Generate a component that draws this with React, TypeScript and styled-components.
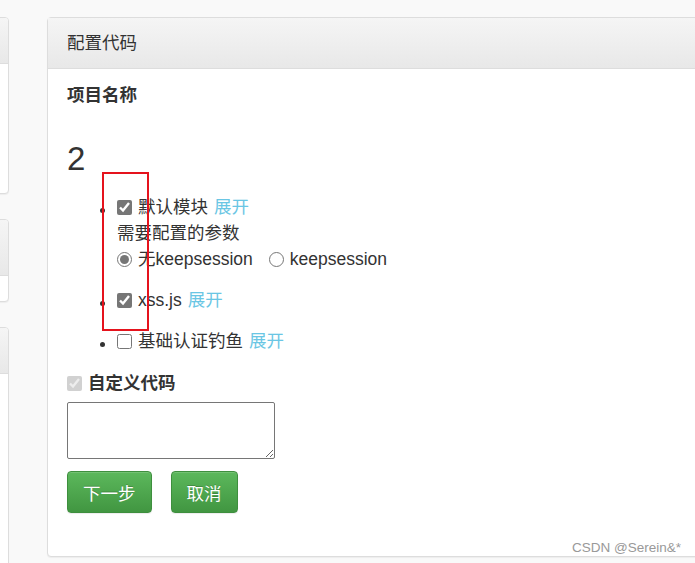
import styled, { createGlobalStyle } from "styled-components";

const GlobalStyle = createGlobalStyle`
  html, body {
    margin: 0;
    padding: 0;
    background: #f9f9f9;
    overflow: hidden;
  }
  body {
    font-family: "Liberation Sans", "Noto Sans CJK SC", sans-serif;
    color: #333;
    font-size: 17.5px;
  }
`;

const Page = styled.div`
  position: relative;
  display: flex;
  align-items: flex-start;
  gap: 38px;
  padding-top: 17px;
  width: 100vw;
  height: 563px;
  box-sizing: border-box;
  overflow: hidden;
`;

const SideColumn = styled.div`
  display: flex;
  flex-direction: column;
  gap: 25px;
  width: 200px;
  margin-left: -191px;
  flex-shrink: 0;
`;

const Panel = styled.div<{ $height: number }>`
  background: #fff;
  border: 1px solid #ddd;
  border-radius: 4px;
  box-shadow: 0 1px 1px rgba(0, 0, 0, 0.05);
  height: ${(p) => p.$height}px;
  box-sizing: border-box;
  overflow: hidden;
`;

const PanelHeading = styled.div<{ $height: number }>`
  height: ${(p) => p.$height}px;
  box-sizing: border-box;
  border-bottom: 1px solid #ddd;
  background-image: linear-gradient(to bottom, #f5f5f5 0, #e8e8e8 100%);
  display: flex;
  align-items: center;
  padding: 0 19px 3px;
  font-size: 17.5px;
  color: #333;
`;

const MainPanel = styled.div`
  width: 700px;
  flex-shrink: 0;
  background: #fff;
  border: 1px solid #ddd;
  border-radius: 4px;
  box-shadow: 0 1px 1px rgba(0, 0, 0, 0.05);
  box-sizing: border-box;
`;

const PanelBody = styled.div`
  padding: 15px 19px 43px;
`;

const FieldLabel = styled.div`
  font-weight: bold;
  line-height: 22px;
`;

const BigNumber = styled.div`
  font-size: 33px;
  line-height: 36px;
  margin-top: 35px;
`;

const ModuleList = styled.ul`
  list-style: disc;
  margin: 17px 0 18px;
  padding-left: 50px;
  font-size: 10px;
`;

const ModuleItem = styled.li<{ $last?: boolean }>`
  line-height: 26px;
  padding-bottom: ${(p) => (p.$last ? 0 : 15)}px;
  font-size: 17.5px;
`;

const Row = styled.div`
  display: flex;
  align-items: center;
  height: 26px;
`;

const Check = styled.input`
  width: 15px;
  height: 15px;
  margin: 0 6px 0 0;
  accent-color: #767676;
`;

const Radio = styled.input`
  width: 15px;
  height: 15px;
  margin: 0 6px 0 0;
  accent-color: #767676;
`;

const RadioLabel = styled.label`
  display: flex;
  align-items: center;
  margin-right: 16px;
`;

const ExpandLink = styled.a`
  color: #6ac6e4;
  text-decoration: none;
  margin-left: 6px;
  cursor: pointer;
`;

const CustomRow = styled.div`
  display: flex;
  align-items: center;
  line-height: 22px;
  font-weight: bold;
`;

const CodeArea = styled.textarea`
  display: block;
  margin-top: 8px;
  width: 208px;
  height: 57px;
  box-sizing: border-box;
  border: 1px solid #767676;
  border-radius: 2px;
  font: inherit;
`;

const ButtonRow = styled.div`
  display: flex;
  gap: 19px;
  margin-top: 12px;
`;

const GreenButton = styled.button`
  height: 42px;
  padding: 0 15px;
  font-family: "Liberation Sans", "Noto Sans CJK SC", sans-serif;
  font-size: 17.5px;
  color: #fff;
  border: 1px solid #3e8f3e;
  border-radius: 4px;
  background-image: linear-gradient(to bottom, #5cb85c 0, #419641 100%);
  text-shadow: 0 -1px 0 rgba(0, 0, 0, 0.2);
  box-shadow: inset 0 1px 0 rgba(255, 255, 255, 0.15), 0 1px 1px rgba(0, 0, 0, 0.075);
  cursor: pointer;
`;

const Watermark = styled.div`
  position: absolute;
  left: 572px;
  top: 540px;
  font-size: 13.5px;
  color: #999;
  font-family: "Liberation Sans", sans-serif;
`;

const Annotation = styled.div`
  position: absolute;
  left: 102px;
  top: 172px;
  width: 47px;
  height: 159px;
  border: 2px solid #e5131d;
  box-sizing: border-box;
  pointer-events: none;
`;

export default function App() {
  return (
    <>
      <GlobalStyle />
      <Page>
        <SideColumn>
          <Panel $height={177}>
            <PanelHeading $height={46} />
          </Panel>
          <Panel $height={83}>
            <PanelHeading $height={56} />
          </Panel>
          <Panel $height={300}>
            <PanelHeading $height={46} />
          </Panel>
        </SideColumn>
        <MainPanel>
          <PanelHeading $height={51}>配置代码</PanelHeading>
          <PanelBody>
            <FieldLabel>项目名称</FieldLabel>
            <BigNumber>2</BigNumber>
            <ModuleList>
              <ModuleItem>
                <Row>
                  <Check type="checkbox" defaultChecked />
                  默认模块<ExpandLink>展开</ExpandLink>
                </Row>
                <Row>需要配置的参数</Row>
                <Row>
                  <RadioLabel>
                    <Radio type="radio" name="ks" defaultChecked />
                    无keepsession
                  </RadioLabel>
                  <RadioLabel>
                    <Radio type="radio" name="ks" />
                    keepsession
                  </RadioLabel>
                </Row>
              </ModuleItem>
              <ModuleItem>
                <Row>
                  <Check type="checkbox" defaultChecked />
                  xss.js<ExpandLink>展开</ExpandLink>
                </Row>
              </ModuleItem>
              <ModuleItem $last>
                <Row>
                  <Check type="checkbox" />
                  基础认证钓鱼<ExpandLink>展开</ExpandLink>
                </Row>
              </ModuleItem>
            </ModuleList>
            <CustomRow>
              <Check type="checkbox" defaultChecked disabled />
              自定义代码
            </CustomRow>
            <CodeArea />
            <ButtonRow>
              <GreenButton>下一步</GreenButton>
              <GreenButton>取消</GreenButton>
            </ButtonRow>
          </PanelBody>
        </MainPanel>
        <Watermark>CSDN @Serein&amp;*</Watermark>
        <Annotation />
      </Page>
    </>
  );
}
